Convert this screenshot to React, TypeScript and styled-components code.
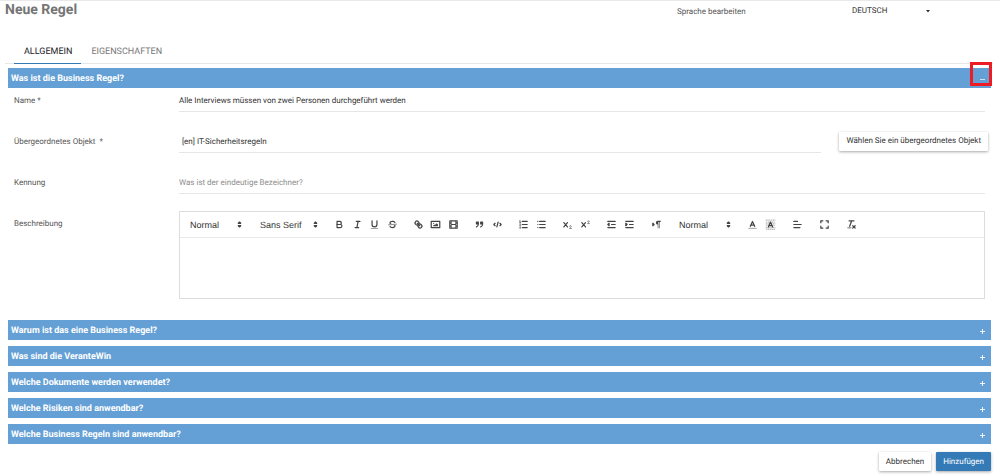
import React, { useState } from "react";
import styled, { createGlobalStyle, css } from "styled-components";

const GlobalStyle = createGlobalStyle`
  *, *::before, *::after { box-sizing: border-box; }
  body {
    margin: 0;
    background: #fff;
    color: #555;
    font-family: Roboto, "Liberation Sans", sans-serif;
    font-size: 8px;
    line-height: 12px;
    text-rendering: geometricPrecision;
  }
  button, input, select, textarea {
    font: inherit;
    color: inherit;
    text-rendering: inherit;
    margin: 0;
  }
`;

const Page = styled.main`
  border-top: 1px solid #e9e9e9;
  padding-bottom: 4px;
`;

const Header = styled.header`
  display: flex;
  align-items: flex-start;
  height: 38px;
  padding: 0 70px 0 5px;
`;

const Title = styled.h1`
  flex: 1;
  margin: 0;
  font-size: 14px;
  line-height: 18px;
  font-weight: 700;
  color: #757575;
`;

const LanguageLabel = styled.label`
  width: 175px;
  padding-top: 5px;
  color: #555;
`;

const SelectBox = styled.span<{ $width: number }>`
  display: inline-grid;
  grid-template-columns: 1fr;
  align-items: center;
  justify-items: end;
  width: ${(p) => p.$width}px;

  > * { grid-area: 1 / 1; }
  > svg { pointer-events: none; }
`;

const FormatBox = styled(SelectBox)`
  padding: 0 1px 0 5px;
`;

const PlainSelect = styled.select`
  appearance: none;
  width: 100%;
  height: 20px;
  padding: 0;
  border: 0;
  outline: 0;
  background: transparent;
  color: #333;
`;

const LanguageCaret = styled.svg`
  width: 4px;
  height: 3px;
`;

const Tabs = styled.nav`
  display: flex;
  margin: 0 7px 0 5px;
  padding-left: 9px;
  border-bottom: 1px solid #e6e6e6;
`;

const Tab = styled.button<{ $active?: boolean }>`
  height: 25px;
  margin-bottom: -1px;
  padding: 1px 9px 0 10px;
  border: 0;
  border-bottom: 1px solid ${(p) => (p.$active ? "#337ab7" : "transparent")};
  background: none;
  color: ${(p) => (p.$active ? "#222" : "#777")};
  font-size: 9px;
`;

const Sections = styled.div`
  display: flex;
  flex-direction: column;
  gap: 6px;
  padding: 4px 9px 0 8px;
`;

const SectionBar = styled.button`
  position: relative;
  display: flex;
  align-items: center;
  justify-content: space-between;
  width: 100%;
  height: 20px;
  padding: 2px 6px 0 3px;
  border: 0;
  background: #64a0d5;
  color: #fff;
  font-size: 9px;
  font-weight: 700;
  text-align: left;
`;

const ToggleSign = styled.svg`
  width: 5px;
  height: 5px;
`;

const Highlight = styled.span`
  position: absolute;
  top: -6px;
  right: -1px;
  width: 22px;
  height: 24px;
  border: 3px solid #ed1c24;
`;

const Fields = styled.div`
  display: flex;
  flex-direction: column;
  gap: 17px;
  padding: 0 3px 15px 6px;
`;

const FieldRow = styled.div<{ $top?: boolean }>`
  display: grid;
  grid-template-columns: 165px 1fr;
  align-items: ${(p) => (p.$top ? "start" : "stretch")};
  padding-right: 3px;
`;

const FieldLabel = styled.label`
  padding-top: 7px;
  color: #555;
  white-space: pre;
`;

const FieldInput = styled.input<{ $indent?: boolean }>`
  width: 100%;
  min-width: 0;
  height: 24px;
  padding: 2px 0 0 ${(p) => (p.$indent ? 3 : 0)}px;
  border: 0;
  border-bottom: 1px solid #e6e6e6;
  border-radius: 0;
  outline: 0;
  background: transparent;
  color: #333;

  &::placeholder { color: #8c8c8c; opacity: 1; }
`;

const PickerField = styled.div`
  display: flex;
  align-items: center;
  gap: 18px;
  margin-right: -3px;
`;

const ActionButton = styled.button<{ $primary?: boolean }>`
  flex: none;
  height: 19px;
  padding: 0 7px;
  border: 0;
  border-radius: 1px;
  box-shadow: 0 1px 3px rgba(0, 0, 0, 0.35);
  background: #fff;
  color: #333;
  ${(p) =>
    p.$primary &&
    css`
      background: #337ab7;
      color: #fff;
    `}
`;

const Editor = styled.div`
  border: 1px solid #ddd;
`;

const Toolbar = styled.div`
  display: flex;
  align-items: center;
  gap: 9px;
  height: 26px;
  padding: 0 5px;
  border-bottom: 1px solid #e9e9e9;
  font-family: "Liberation Sans", Arial, sans-serif;
  font-size: 9px;
`;

const ToolGroup = styled.div<{ $count: number; $width: number }>`
  display: grid;
  grid-template-columns: repeat(${(p) => p.$count}, 1fr);
  width: ${(p) => p.$width}px;
`;

const ToolButton = styled.button`
  display: grid;
  place-items: center;
  height: 16px;
  padding: 0;
  border: 0;
  background: none;
`;

const ToolIcon = styled.svg`
  width: 11px;
  height: 11px;
  fill: none;
  stroke: #444;
  stroke-width: 2;
  stroke-linecap: round;
  stroke-linejoin: round;

  .fill { fill: #444; stroke: none; }
  .solid { fill: #444; }
  .thin { stroke-width: 1; }
  .soft { opacity: 0.4; }
`;

const EditorArea = styled.textarea`
  display: block;
  width: 100%;
  height: 60px;
  padding: 7px 10px;
  border: 0;
  outline: 0;
  resize: none;
`;

const Footer = styled.footer`
  display: flex;
  justify-content: flex-end;
  gap: 5px;
  padding: 8px 9px 0;
`;

const icons: Record<string, React.ReactNode> = {
  Fett: (
    <>
      <path d="M5,4H9.5a2.5,2.5,0,0,1,0,5H5Z" />
      <path d="M5,9h5.5a2.5,2.5,0,0,1,0,5H5Z" />
    </>
  ),
  Kursiv: <path d="M7,4H13M5,14H11M8,14L10,4" />,
  Unterstrichen: (
    <>
      <path d="M5,3V9a4,4,0,0,0,8,0V3" />
      <rect className="fill" x="3" y="15" width="12" height="1" rx="0.5" />
    </>
  ),
  Durchgestrichen: (
    <>
      <path className="thin" d="M15.5,8.5L2.5,9.5" />
      <path
        className="fill"
        d="M9.007,8C6.542,7.791,6,7.519,6,6.5,6,5.792,7.283,5,9,5c1.571,0,2.765.679,2.969,1.309a1,1,0,0,0,1.9-.617C13.356,4.106,11.354,3,9,3,6.2,3,4,4.538,4,6.5a3.2,3.2,0,0,0,.5,1.843Z"
      />
      <path
        className="fill"
        d="M8.984,10C11.457,10.208,12,10.479,12,11.5c0,.708-1.283,1.5-3,1.5-1.571,0-2.765-.679-2.969-1.309a1,1,0,1,0-1.9.617C4.644,13.894,6.646,15,9,15c2.8,0,5-1.538,5-3.5a3.2,3.2,0,0,0-.5-1.843Z"
      />
    </>
  ),
  Link: (
    <>
      <path d="M7,7L11,11" />
      <path d="M8.9,4.577a3.476,3.476,0,0,1,.36,4.679A3.476,3.476,0,0,1,4.577,8.9C3.185,7.5,2.035,6.4,4.217,4.217S7.5,3.185,8.9,4.577Z" />
      <path d="M13.423,9.1a3.476,3.476,0,0,0-4.679-.36,3.476,3.476,0,0,0,.36,4.679c1.392,1.392,2.5,2.542,4.679.36S14.815,10.5,13.423,9.1Z" />
    </>
  ),
  Bild: (
    <>
      <rect x="2" y="4" width="14" height="10" />
      <circle className="fill" cx="6" cy="7" r="1" />
      <path className="fill" d="M5,12V11L7,9L8,10L11,7L13,9V12Z" />
    </>
  ),
  Video: (
    <>
      <rect x="3" y="3" width="12" height="12" />
      <path
        className="fill"
        d="M5,3h1v12H5ZM12,3h1v12H12ZM5,8h8v2H5ZM3,5h3v1H3ZM3,7h3v1H3ZM3,10h3v1H3ZM3,12h3v1H3ZM12,5h3v1H12ZM12,7h3v1H12ZM12,10h3v1H12ZM12,12h3v1H12Z"
      />
    </>
  ),
  Zitat: (
    <>
      <path className="solid" d="M4,5h3v3H4ZM11,5h3v3H11Z" />
      <path d="M7,8c0,4.031-3,5-3,5M14,8c0,4.031-3,5-3,5" />
    </>
  ),
  Code: <path d="M5,7L3,9L5,11M13,7L15,9L13,11M10,5L8,13" />,
  "Nummerierte Liste": (
    <>
      <path d="M7,4H15M7,9H15M7,14H15" />
      <path
        className="thin"
        d="M2.5,3L3.5,2.5V5.5M2.5,5.5h2M4.5,10.5h-2c0-.234,1.85-1.076,1.85-2.234A.959,.959,0,0,0,2.5,8.156M2.5,14.846a.959,.959,0,0,0,1.85-.109A.7,.7,0,0,0,3.75,14a.688,.688,0,0,0,.6-.736,.959,.959,0,0,0-1.85-.109"
      />
    </>
  ),
  Aufzählung: <path d="M6,4H15M6,9H15M6,14H15M3,4H3.01M3,9H3.01M3,14H3.01" />,
  Tiefgestellt: (
    <>
      <path d="M3,6L9,13M9,6L3,13" />
      <path className="thin" d="M12.5,12a1.3,1.3,0,1,1,2.6,.4C14.8,13.8,12.5,14.4,12.5,15.5h3" />
    </>
  ),
  Hochgestellt: (
    <>
      <path d="M3,6L9,13M9,6L3,13" />
      <path className="thin" d="M12.5,4a1.3,1.3,0,1,1,2.6,.4C14.8,5.8,12.5,6.4,12.5,7.5h3" />
    </>
  ),
  "Einzug verkleinern": (
    <>
      <path d="M3,14H15M3,4H15M9,9H15" />
      <path className="solid" d="M5,7V11L3,9Z" />
    </>
  ),
  "Einzug vergrößern": (
    <>
      <path d="M3,14H15M3,4H15M9,9H15" />
      <path className="solid" d="M3,7V11L5,9Z" />
    </>
  ),
  Textrichtung: (
    <>
      <path className="solid" d="M3,11L5,9L3,7Z" />
      <path className="fill" d="M11,3a3,3,0,0,0,0,6v6h1V5h1v10h1V5h2V3Z" />
    </>
  ),
  Textfarbe: (
    <>
      <path className="soft" d="M3,15.5H15" />
      <path d="M5.5,12L9,4L12.5,12M11.6,10H6.4" />
    </>
  ),
  Hintergrundfarbe: (
    <>
      <path
        className="soft"
        strokeDasharray="2 1"
        strokeLinecap="butt"
        d="M1,2H17M2,5H17M1,8H17M2,11H17M1,14H17M2,17H17"
      />
      <path d="M5.5,13L9,5L12.5,13M11.6,11H6.4" />
    </>
  ),
  Ausrichtung: <path d="M3,9H15M3,14H13M3,4H9" />,
  Vollbild: (
    <path strokeLinecap="butt" strokeLinejoin="miter" d="M3,7V3H7M11,3H15V7M15,11V15H11M7,15H3V11" />
  ),
  "Formatierung entfernen": (
    <>
      <path d="M5,3H13M6,12L9.35,3M11,11L15,15M15,11L11,15" />
      <rect className="fill" x="2" y="14" width="7" height="1" rx="0.5" />
    </>
  ),
};

function Tools({ names, width }: { names: string[]; width: number }) {
  return (
    <ToolGroup $count={names.length} $width={width}>
      {names.map((name) => (
        <ToolButton key={name} type="button" aria-label={name}>
          <ToolIcon viewBox="0 0 18 18">{icons[name]}</ToolIcon>
        </ToolButton>
      ))}
    </ToolGroup>
  );
}

function FormatSelect({ label, value, width }: { label: string; value: string; width: number }) {
  return (
    <FormatBox $width={width}>
      <PlainSelect aria-label={label}>
        <option>{value}</option>
      </PlainSelect>
      <ToolIcon viewBox="0 0 18 18">
        <path className="solid" d="M7,11L9,13L11,11ZM7,7L9,5L11,7Z" />
      </ToolIcon>
    </FormatBox>
  );
}

function Section({
  title,
  open,
  highlighted,
  onToggle,
  children,
}: {
  title: string;
  open: boolean;
  highlighted?: boolean;
  onToggle: () => void;
  children?: React.ReactNode;
}) {
  return (
    <section>
      <SectionBar type="button" aria-expanded={open} onClick={onToggle}>
        {title}
        <ToggleSign viewBox="0 0 5 5" stroke="#fff" strokeWidth="1">
          <path d={open ? "M0,2.5H5" : "M0,2.5H5M2.5,0V5"} opacity={open ? 0.7 : 0.9} />
        </ToggleSign>
        {highlighted && <Highlight />}
      </SectionBar>
      {open && children}
    </section>
  );
}

const closedSections = [
  "Warum ist das eine Business Regel?",
  "Was sind die VeranteWin",
  "Welche Dokumente werden verwendet?",
  "Welche Risiken sind anwendbar?",
  "Welche Business Regeln sind anwendbar?",
];

export default function App() {
  const [tab, setTab] = useState("ALLGEMEIN");
  const [generalOpen, setGeneralOpen] = useState(true);
  const [opened, setOpened] = useState<string[]>([]);

  const toggle = (title: string) =>
    setOpened((list) => (list.includes(title) ? list.filter((t) => t !== title) : [...list, title]));

  return (
    <Page>
      <GlobalStyle />
      <Header>
        <Title>Neue Regel</Title>
        <LanguageLabel htmlFor="language">Sprache bearbeiten</LanguageLabel>
        <SelectBox $width={78}>
          <PlainSelect id="language">
            <option>DEUTSCH</option>
          </PlainSelect>
          <LanguageCaret viewBox="0 0 4 3">
            <path d="M0,0H4L2,2.5Z" fill="#333" />
          </LanguageCaret>
        </SelectBox>
      </Header>

      <Tabs>
        {["ALLGEMEIN", "EIGENSCHAFTEN"].map((name) => (
          <Tab key={name} type="button" $active={tab === name} onClick={() => setTab(name)}>
            {name}
          </Tab>
        ))}
      </Tabs>

      <Sections>
        <Section
          title="Was ist die Business Regel?"
          open={generalOpen}
          highlighted
          onToggle={() => setGeneralOpen(!generalOpen)}
        >
          <Fields>
            <FieldRow>
              <FieldLabel htmlFor="name">Name *</FieldLabel>
              <FieldInput
                id="name"
                defaultValue="Alle Interviews müssen von zwei Personen durchgeführt werden"
              />
            </FieldRow>
            <FieldRow>
              <FieldLabel htmlFor="parent">{"Übergeordnetes Objekt  *"}</FieldLabel>
              <PickerField>
                <FieldInput id="parent" $indent defaultValue="[en] IT-Sicherheitsregeln" />
                <ActionButton type="button">Wählen Sie ein übergeordnetes Objekt</ActionButton>
              </PickerField>
            </FieldRow>
            <FieldRow>
              <FieldLabel htmlFor="identifier">Kennung</FieldLabel>
              <FieldInput id="identifier" placeholder="Was ist der eindeutige Bezeichner?" />
            </FieldRow>
            <FieldRow $top>
              <FieldLabel htmlFor="description">Beschreibung</FieldLabel>
              <Editor>
                <Toolbar>
                  <FormatSelect label="Überschrift" value="Normal" width={61} />
                  <FormatSelect label="Schriftart" value="Sans Serif" width={67} />
                  <Tools width={70} names={["Fett", "Kursiv", "Unterstrichen", "Durchgestrichen"]} />
                  <Tools width={52} names={["Link", "Bild", "Video"]} />
                  <Tools width={35} names={["Zitat", "Code"]} />
                  <Tools width={35} names={["Nummerierte Liste", "Aufzählung"]} />
                  <Tools width={35} names={["Tiefgestellt", "Hochgestellt"]} />
                  <Tools width={35} names={["Einzug verkleinern", "Einzug vergrößern"]} />
                  <Tools width={18} names={["Textrichtung"]} />
                  <FormatSelect label="Schriftgröße" value="Normal" width={61} />
                  <Tools width={35} names={["Textfarbe", "Hintergrundfarbe"]} />
                  <Tools width={18} names={["Ausrichtung"]} />
                  <Tools width={18} names={["Vollbild"]} />
                  <Tools width={18} names={["Formatierung entfernen"]} />
                </Toolbar>
                <EditorArea id="description" />
              </Editor>
            </FieldRow>
          </Fields>
        </Section>
        {closedSections.map((title) => (
          <Section
            key={title}
            title={title}
            open={opened.includes(title)}
            onToggle={() => toggle(title)}
          />
        ))}
      </Sections>

      <Footer>
        <ActionButton type="button">Abbrechen</ActionButton>
        <ActionButton type="button" $primary>
          Hinzufügen
        </ActionButton>
      </Footer>
    </Page>
  );
}
